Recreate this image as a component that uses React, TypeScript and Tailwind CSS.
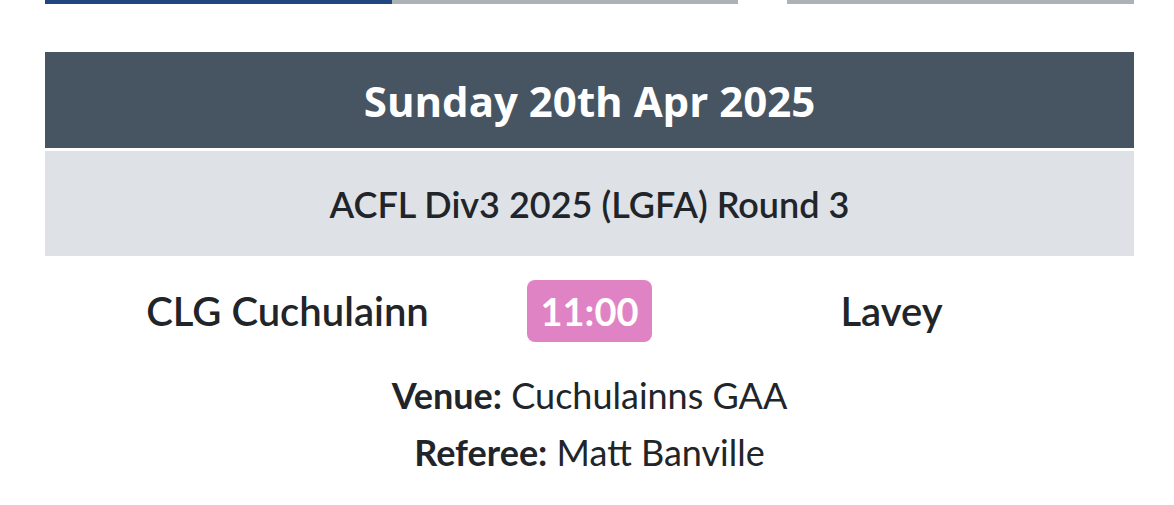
import React from "react";

const BODY = { fontFamily: '"Lato", "Open Sans", sans-serif' };
const HEAD = { fontFamily: '"Open Sans", "Noto Sans", sans-serif' };

function ProgressBars() {
  return (
    <div className="flex h-[4px] gap-[49px]">
      <div className="flex w-[693px]">
        <div className="w-1/2 bg-[#1f4681]" />
        <div className="w-1/2 bg-[#adb2b7]" />
      </div>
      <div className="w-[347px] bg-[#adb2b7]" />
    </div>
  );
}

export default function App() {
  return (
    <div className="min-h-[505px] w-full bg-white text-[#212529]" style={BODY}>
      <div className="ml-[45px] w-[1089px]">
        <ProgressBars />

        <div
          className="mt-[48px] flex h-[96px] items-center justify-center bg-[#475563] text-[42px] font-bold text-white"
          style={HEAD}
        >
          Sunday 20th Apr 2025
        </div>

        <div className="mt-[3px] flex h-[105px] items-center justify-center bg-[#dee2e6] text-[36px] font-semibold">
          ACFL Div3 2025 (LGFA) Round 3
        </div>

        <div className="mt-[24px] grid grid-cols-[302px_302px_302px] items-center justify-center">
          <div className="text-center text-[40px] font-semibold">CLG Cuchulainn</div>
          <div className="flex justify-center">
            <span className="flex h-[62px] w-[125px] items-center justify-center rounded-[8px] bg-[#e083c4] text-[38px] font-bold text-white">
              11:00
            </span>
          </div>
          <div className="text-center text-[40px] font-semibold">Lavey</div>
        </div>

        <div className="mt-[31px] flex flex-col items-center gap-[13px] text-[36px] leading-[44px]">
          <div>
            <span className="font-bold">Venue:</span> Cuchulainns GAA
          </div>
          <div>
            <span className="font-bold">Referee:</span> Matt Banville
          </div>
        </div>
      </div>
    </div>
  );
}
